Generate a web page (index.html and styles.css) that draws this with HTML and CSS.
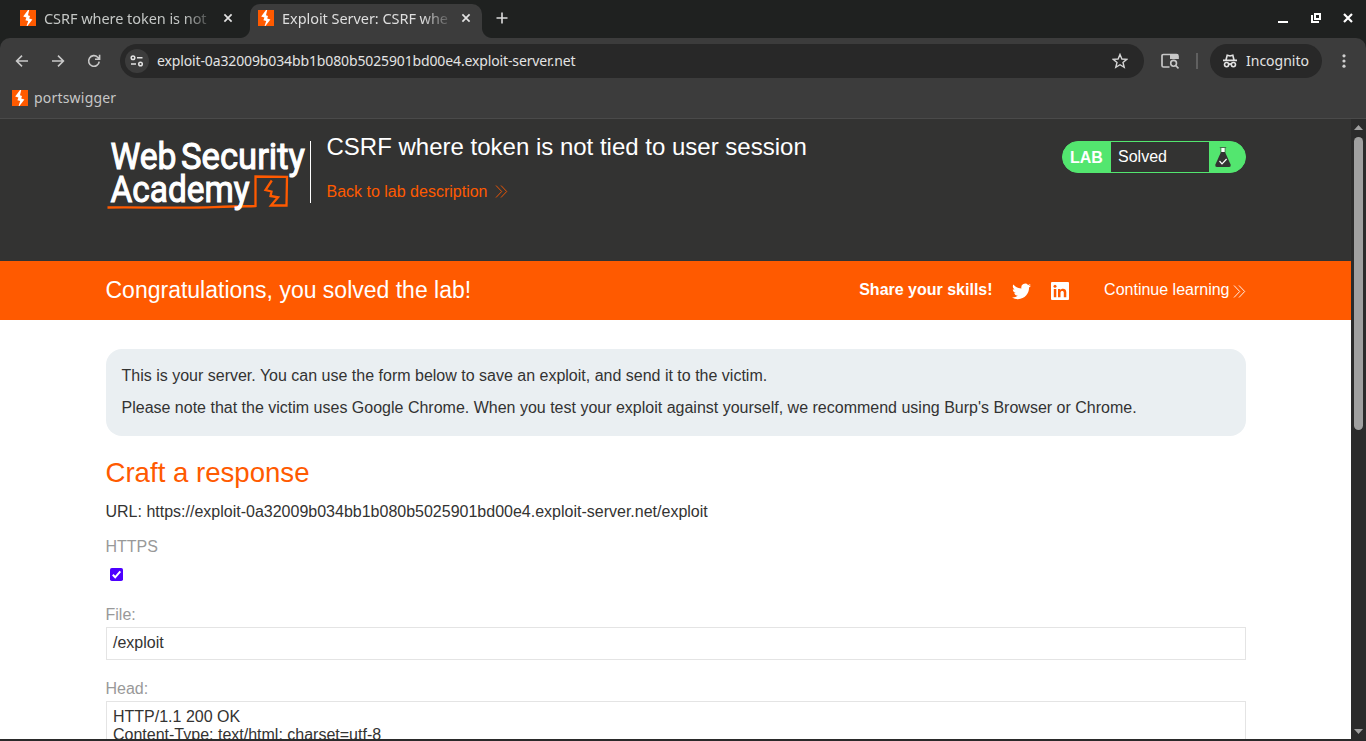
FILE: index.html
```html
<!DOCTYPE html>
<html lang="en">
<head>
<meta charset="utf-8">
<title>Exploit Server: CSRF where token is not tied to user session</title>
<link rel="stylesheet" href="styles.css">
</head>
<body>
<svg class="defs" width="0" height="0">
  <symbol id="bolt" viewBox="0 0 16 16"><rect width="16" height="16" fill="#ff5a00"/><path d="M9.2 0 8 5.2 10 6 9.2 8.4 12.4 9.4 7.4 16H6.6L8.2 11 5.4 10.2 6.4 7.6 3.2 6.6 8 0Z" fill="#fff"/></symbol>
  <symbol id="close" viewBox="0 0 10 10"><path d="M1.4 1.4 8.6 8.6M8.6 1.4 1.4 8.6" fill="none" stroke="currentColor" stroke-width="1.7"/></symbol>
  <symbol id="chevrons" viewBox="0 0 13 13"><path d="M1 .5 6.7 6.5 1 12.5M6 .5 11.7 6.5 6 12.5" fill="none" stroke="currentColor" stroke-width=".9"/></symbol>
</svg>
<div class="window">
  <div class="tabstrip">
    <div class="tab idle">
      <svg class="favicon"><use href="#bolt"/></svg>
      <span class="tab-title">CSRF where token is not</span>
      <svg class="tab-close"><use href="#close"/></svg>
    </div>
    <div class="tab active">
      <svg class="favicon"><use href="#bolt"/></svg>
      <span class="tab-title">Exploit Server: CSRF whe</span>
      <svg class="tab-close"><use href="#close"/></svg>
    </div>
    <svg class="new-tab" viewBox="0 0 12 12"><path d="M6 .5v11M.5 6h11" stroke="#dcdcdc" stroke-width="1.6"/></svg>
    <div class="window-buttons">
      <svg width="10" height="10"><path d="M0 9h10" stroke="#fff" stroke-width="2"/></svg>
      <svg width="10" height="10"><path d="M4 1h5v5H4ZM1 2v7h7" fill="none" stroke="#fff" stroke-width="2"/></svg>
      <svg width="10" height="10"><path d="M1 1l8 8M9 1 1 9" stroke="#fff" stroke-width="2.2"/></svg>
    </div>
  </div>
  <div class="toolbar">
    <svg class="nav back" viewBox="0 0 14 14"><path d="M13 7H1.8M7 1.6 1.6 7 7 12.4" fill="none" stroke="#c9c9c9" stroke-width="1.6"/></svg>
    <svg class="nav" viewBox="0 0 14 14"><path d="M1 7h11.2M7 1.6 12.4 7 7 12.4" fill="none" stroke="#c9c9c9" stroke-width="1.6"/></svg>
    <svg class="nav" viewBox="0 0 14 14"><path d="M12.2 7.6A5.3 5.3 0 1 1 10.7 3.2L12.3 4.8M12.6.8v4.5H8" fill="none" stroke="#c9c9c9" stroke-width="1.6"/></svg>
    <div class="omnibox">
      <span class="site-info"><svg width="14" height="12" viewBox="0 0 14 12"><g fill="none" stroke="#e3e3e3" stroke-width="1.5"><circle cx="3" cy="2.8" r="1.8"/><path d="M7 2.8h5.5M1 9h5"/><circle cx="10.5" cy="9" r="1.8"/></g></svg></span>
      <span class="url">exploit-0a32009b034bb1b080b5025901bd00e4.exploit-server.net</span>
      <svg class="star" viewBox="0 0 16 16"><path d="M8 1.4 9.9 6l4.9.3-3.8 3.2 1.2 4.8L8 11.7l-4.2 2.6L5 9.5 1.2 6.3 6.1 6Z" fill="none" stroke="#d6d6d6" stroke-width="1.4"/></svg>
    </div>
    <svg class="lens" viewBox="0 0 18 16"><path d="M8.5 14H2.5Q1 14 1 12.5V2.8Q1 1.5 2.3 1.5H15.5Q17 1.5 17 3V6" fill="none" stroke="#c7c7c7" stroke-width="1.7"/><path d="M9 1h8v5H9z" fill="#c7c7c7"/><circle cx="12.6" cy="10.3" r="2.9" fill="none" stroke="#c7c7c7" stroke-width="1.6"/><path d="M14.7 12.5 17.5 15.4" stroke="#c7c7c7" stroke-width="1.7"/></svg>
    <span class="divider"></span>
    <div class="incognito">
      <svg width="14" height="14" viewBox="0 0 14 14"><g fill="none" stroke="#e3e3e3" stroke-width="1.6"><path d="M0 6.4h14M3 6 4.2 1.2 7 2l2.8-.8L11 6"/><circle cx="3.6" cy="10.6" r="2.1"/><circle cx="10.4" cy="10.6" r="2.1"/><path d="M5.7 10.2q1.3-.7 2.6 0"/></g></svg>
      <span>Incognito</span>
    </div>
    <svg class="kebab" viewBox="0 0 4 14"><g fill="#d0d0d0"><circle cx="2" cy="1.8" r="1.6"/><circle cx="2" cy="7" r="1.6"/><circle cx="2" cy="12.2" r="1.6"/></g></svg>
  </div>
  <div class="bookmarks">
    <svg class="favicon"><use href="#bolt"/></svg>
    <span>portswigger</span>
  </div>
  <div class="viewport">
    <main class="page">
      <header class="lab-header">
        <svg class="logo" viewBox="0 0 204 92" role="img">
          <path d="M1.5 88.5C40 88 75 89.5 108 88.2S140 87.5 149.500 87L149.500 57.500 181 57.800 180.500 86.500 165 86.500 172 78.300 164.500 77 165.500 72.500 159.500 71 165.800 61.500" fill="none" stroke="#ff5a00" stroke-width="2.3"/>
          <g class="logo-text">
            <text x="4.500" y="50" textLength="66" lengthAdjust="spacingAndGlyphs">Web</text>
            <text x="75" y="50" textLength="124" lengthAdjust="spacingAndGlyphs">Security</text>
            <text x="4.500" y="82.800" textLength="139" lengthAdjust="spacingAndGlyphs">Academy</text>
          </g>
        </svg>
        <div class="lab-title">
          <h1>CSRF where token is not tied to user session</h1>
          <a class="back-link">Back to lab description <svg class="chev"><use href="#chevrons"/></svg></a>
        </div>
        <div class="lab-status">
          <b>LAB</b><span>Solved</span>
          <i><svg width="16" height="20" viewBox="0 0 16 20"><path d="M4.8.4h6.4M6 .5v5M10 .5v5" stroke="#48644c"/><path d="M6.4 1h3.2v4.2H6.4Z" fill="#fff"/><path d="M6 5h4l5.7 12.8Q16 20 14.2 20H1.8Q0 20 .3 17.8Z" fill="#333332"/><path d="M4.5 14 7 16.8 11.6 12" fill="none" stroke="#fff" stroke-width="1.2"/></svg></i>
        </div>
      </header>
      <section class="banner">
        <h2>Congratulations, you solved the lab!</h2>
        <b>Share your skills!</b>
        <svg class="twitter" viewBox="0 0 24 20"><path fill="#fff" d="M24 2.4c-.9.4-1.8.7-2.8.8 1-.6 1.8-1.6 2.2-2.7-1 .6-2 1-3.1 1.2A4.9 4.9 0 0 0 11.9 6.2C7.8 6 4.2 4 1.7 1 .4 3.3 1.1 6.2 3.2 7.6c-.8 0-1.6-.2-2.2-.6 0 2.3 1.6 4.4 3.9 4.9-.7.2-1.5.2-2.2.1.6 2 2.4 3.4 4.6 3.4A9.9 9.900 0 0 1 0 17.500 14 14 0 0 0 7.500 19.700c9.100 0 14.300-7.700 14-14.600 1-.7 1.800-1.600 2.500-2.700Z"/></svg>
        <svg class="linkedin" viewBox="0 0 18 18"><rect width="18" height="18" rx="1" fill="#fff"/><g fill="#ff5a00"><path d="M2.8 7h2.500v8.200H2.800ZM7 7h2.400v1.200c1.200-2 5.900-2.100 5.900 2v5h-2.500v-4.400c0-2.500-3.300-2.300-3.300 0v4.400H7Z"/><circle cx="4" cy="4.200" r="1.500"/></g></svg>
        <a class="continue">Continue learning <svg class="chev"><use href="#chevrons"/></svg></a>
      </section>
      <section class="content">
        <div class="notice">
          <p>This is your server. You can use the form below to save an exploit, and send it to the victim.</p>
          <p>Please note that the victim uses Google Chrome. When you test your exploit against yourself, we recommend using Burp's Browser or Chrome.</p>
        </div>
        <h2 class="section-title">Craft a response</h2>
        <p class="target">URL: https://exploit-0a32009b034bb1b080b5025901bd00e4.exploit-server.net/exploit</p>
        <div class="label">HTTPS</div>
        <svg class="check" viewBox="0 0 13 13"><rect width="13" height="13" rx="1.8" fill="#4d00ff"/><path d="M2.8 6.8 5.2 9.300 10.300 3.300" fill="none" stroke="#fff" stroke-width="2"/></svg>
        <div class="label file">File:</div>
        <div class="field">/exploit</div>
        <div class="label head">Head:</div>
        <div class="field area">HTTP/1.1 200 OK<br>Content-Type: text/html; charset=utf-8</div>
      </section>
    </main>
    <aside class="scrollbar">
      <svg width="9" height="5"><path d="M0 5 4.5 0 9 5Z" fill="#a0a0a0"/></svg>
      <span class="thumb"></span>
      <svg class="down" width="9" height="5"><path d="M0 0 4.5 5 9 0Z" fill="#a0a0a0"/></svg>
    </aside>
  </div>
</div>
</body>
</html>
```
FILE: styles.css
```css
* { box-sizing: border-box; }
body { margin: 0; font: 16px/20px "Liberation Sans", Arial, sans-serif; color: #333332; overflow: hidden; }
svg { display: block; flex: none; }
.defs { position: absolute; }
h1, h2, p { margin: 0; font-weight: 400; }
.window { width: 1366px; height: 741px; background: #2a2a2a; display: flex; flex-direction: column; }

.tabstrip { height: 38px; flex: none; background: #1f2120; display: flex; font: 14.5px/20px "Noto Sans", sans-serif; color: #dedede; position: relative; z-index: 1; }
.tab { display: flex; align-items: center; height: 34px; margin-top: 4px; padding-bottom: 6px; }
.idle { width: 250px; padding-left: 20px; color: #c4c7c5; }
.active { width: 232px; padding-left: 8px; background: #3c3c3c; border-radius: 10px 10px 0 0; position: relative; }
.active::before, .active::after { content: ""; position: absolute; bottom: 0; width: 10px; height: 10px; }
.active::before { left: -10px; background: radial-gradient(circle at 0 0, transparent 9.5px, #3c3c3c 10.5px); }
.active::after { right: -10px; background: radial-gradient(circle at 100% 0, transparent 9.5px, #3c3c3c 10.5px); }
.favicon { width: 16px; height: 16px; }
.tab-title { width: 168px; margin-left: 8px; padding-bottom: 1px; white-space: nowrap; letter-spacing: -.05px; -webkit-mask-image: linear-gradient(to right, #000 140px, transparent 172px); mask-image: linear-gradient(to right, #000 140px, transparent 172px); }
.tab-close { width: 10px; height: 10px; margin-left: 11px; color: #e3e3e3; }
.new-tab { width: 12px; height: 12px; margin: 12px 0 0 14px; }
.window-buttons { display: flex; gap: 22px; margin: 13px 13px 0 auto; }
.window-buttons svg:not(:last-child) { margin-right: .5px; }

.toolbar { height: 46px; flex: none; display: flex; align-items: center; background: #3c3c3c; border-radius: 10px 10px 0 0; box-shadow: 0 -10px 0 #1f2120; font: 14px/20px "Noto Sans", sans-serif; color: #e3e3e3; }
.nav { width: 14px; height: 14px; margin-right: 22px; }
.back { margin-left: 15px; }
.omnibox { width: 1024px; height: 34px; margin-left: -3px; padding: 0 16px 0 5px; border-radius: 17px; background: #282828; display: flex; align-items: center; }
.site-info { width: 24px; height: 24px; border-radius: 50%; background: #3c3c3c; display: flex; align-items: center; justify-content: center; }
.url { margin-left: 8px; white-space: nowrap; letter-spacing: -.13px; }
.star { width: 16px; height: 16px; margin-left: auto; }
.lens { width: 18px; height: 16px; margin-left: 17px; }
.divider { width: 2px; height: 16px; margin: 0 12px 0 17px; background: #606060; }
.incognito { width: 112px; height: 34px; padding-left: 13px; border-radius: 17px; background: #282828; display: flex; align-items: center; gap: 9px; }
.kebab { width: 4px; height: 14px; margin-left: 20px; }
.bookmarks { height: 35px; flex: none; display: flex; align-items: center; gap: 6px; padding: 0 12px 7px; background: #3c3c3c; border-bottom: 1px solid #4a4a4a; font: 14px/20px "Noto Sans", sans-serif; letter-spacing: .2px; color: #c7c7c7; }

.viewport { height: 620px; display: flex; overflow: hidden; }
.page { width: 1351px; background: #fff; overflow: hidden; }
.lab-header { height: 142px; padding: 0 105px 0 105.5px; background: #333332; display: flex; align-items: flex-start; }
.logo { width: 204px; height: 92px; }
.logo-text { font: 400 37.5px "Roboto", sans-serif; fill: #fff; stroke: #fff; stroke-width: 1.1px; }
.lab-title { margin-top: 22px; padding-left: 16px; height: 62px; border-left: 1px solid #fff; color: #fff; }
.lab-title h1 { font-size: 24px; line-height: 28px; margin-top: -8px; white-space: nowrap; }
.back-link { display: flex; align-items: center; gap: 8px; margin-top: 20px; line-height: 22px; color: #ff5a00; }
.chev { width: 13px; height: 13px; }
.back-link .chev { margin-top: -2px; }
.lab-status { width: 184px; height: 32px; margin: 22px 0 0 auto; border: 1px solid #53e66f; border-radius: 16px; background: #53e66f; display: flex; overflow: hidden; color: #fff; line-height: 30px; }
.lab-status b { width: 48px; padding-left: 7px; line-height: 31px; }
.lab-status span { width: 98px; padding-left: 7px; background: #333332; }
.lab-status i { padding: 5px 0 0 6px; }

.banner { height: 59px; padding: 0 105px 2px 105.5px; background: #ff5a00; color: #fff; display: flex; align-items: center; }
.banner h2 { font-size: 23px; margin-right: auto; }
.twitter { width: 19px; height: 17px; margin: 3px 0 0 19px; }
.linkedin { width: 18px; height: 18px; margin: 2px 35.5px 0 20px; }
.continue { display: flex; align-items: center; gap: 3.5px; }
.continue .chev { margin-top: 3px; }

.content { padding: 29px 105px 0 105.5px; }
.notice { height: 87px; padding: 11px 16px; border-radius: 16px; background: #eaeff2; line-height: 32px; white-space: nowrap; }
.section-title { margin-top: 21px; font-size: 27.6px; line-height: 32px; color: #ff5a00; }
.target { margin-top: 12px; line-height: 22px; }
.label { margin-top: 14px; line-height: 20px; color: #999; }
.check { width: 13px; height: 13px; margin: 10.5px 0 0 4.5px; }
.file { margin-top: 24.5px; }
.field { height: 33px; margin-top: 2px; padding: 6px 6.5px; border: 1px solid #e4e4e4; line-height: 18px; }
.head { margin-top: 19px; }
.area { height: 100px; }
.scrollbar { width: 15px; background: #2b2b2b; display: flex; flex-direction: column; align-items: center; padding: 6px 0 5px; }
.thumb { width: 9px; height: 293px; margin-top: 7px; border-radius: 5px; background: #a0a0a0; }
.down { margin-top: auto; }
```
